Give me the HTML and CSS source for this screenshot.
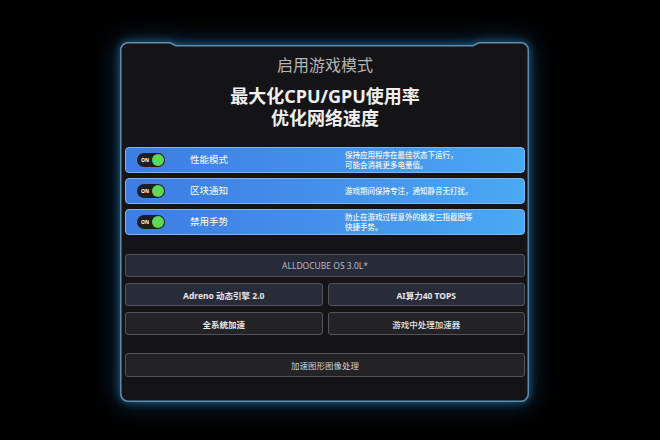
FILE: index.html
```html
<!DOCTYPE html>
<html lang="zh-CN">
<head>
<meta charset="utf-8">
<title>启用游戏模式</title>
<link rel="stylesheet" href="styles.css">
</head>
<body>
<div class="stage">
  <div class="panel">
    <svg class="frame" width="409" height="360" viewBox="0 0 409 360" aria-hidden="true">
      <path d="M0.75 8 A7.25 7.25 0 0 1 8 0.75 L50 0.75 L56 3.75 L353 3.75 L359 0.75 L401 0.75 A7.25 7.25 0 0 1 408.25 8 L408.25 352 A7.25 7.25 0 0 1 401 359.25 L8 359.25 A7.25 7.25 0 0 1 0.75 352 Z"/>
    </svg>
    <div class="content">
      <div class="title">启用游戏模式</div>
      <div class="headline">最大化CPU/GPU使用率<br>优化网络速度</div>

      <div class="rows">
        <div class="row">
          <div class="toggle"><span class="on">ON</span><span class="knob"></span></div>
          <div class="label">性能模式</div>
          <div class="desc">保持应用程序在最佳状态下运行，<br>可能会消耗更多电量值。</div>
        </div>
        <div class="row">
          <div class="toggle"><span class="on">ON</span><span class="knob"></span></div>
          <div class="label">区块通知</div>
          <div class="desc">游戏期间保持专注，通知静音无打扰。</div>
        </div>
        <div class="row">
          <div class="toggle"><span class="on">ON</span><span class="knob"></span></div>
          <div class="label">禁用手势</div>
          <div class="desc">防止在游戏过程意外的触发三指截图等<br>快捷手势。</div>
        </div>
      </div>

      <div class="btn wide os">ALLDOCUBE OS 3.0L*</div>
      <div class="grid">
        <div class="btn blue bold">Adreno 动态引擎 2.0</div>
        <div class="btn blue bold">AI算力40 TOPS</div>
        <div class="btn gray bold">全系统加速</div>
        <div class="btn gray semi">游戏中处理加速器</div>
      </div>
      <div class="btn wide gray last">加速图形图像处理</div>
    </div>
  </div>
</div>
</body>
</html>
```

FILE: styles.css
```css
html, body {
  margin: 0;
  padding: 0;
  background: #000;
}
body {
  width: 660px;
  height: 440px;
  overflow: hidden;
  font-family: "Noto Sans", "Noto Sans CJK SC", sans-serif;
}
.stage {
  padding: 42px 0 0 120px;
}
.panel {
  position: relative;
  width: 409px;
  height: 360px;
}
.frame {
  position: absolute;
  left: 0;
  top: 0;
  filter: drop-shadow(0 0 4px rgba(45, 125, 185, 0.7)) drop-shadow(0 0 12px rgba(30, 95, 150, 0.55));
}
.frame path {
  fill: #141416;
  stroke: #5f8cab;
  stroke-width: 1.5;
}
.content {
  position: relative;
  display: flex;
  flex-direction: column;
  padding: 12px 4px 0 5px;
}
.title {
  text-align: center;
  font-size: 16px;
  line-height: 22px;
  color: #b4b4b6;
}
.headline {
  margin-top: 9px;
  text-align: center;
  font-size: 18px;
  line-height: 22px;
  font-weight: 700;
  color: #f0f0f0;
}
.rows {
  margin-top: 18px;
  display: flex;
  flex-direction: column;
  gap: 5px;
}
.row {
  box-sizing: border-box;
  height: 26px;
  border: 1px solid #7bb6f2;
  border-radius: 4px;
  background: linear-gradient(90deg, #3e7de4 0%, #4592ec 55%, #4aa9f4 100%);
  display: grid;
  grid-template-columns: 53px 155px 1fr;
  align-items: center;
  padding-left: 11px;
}
.toggle {
  position: relative;
  width: 28px;
  height: 14px;
  border-radius: 7px;
  background: #1d1e22;
  display: flex;
  align-items: center;
  justify-content: space-between;
  padding: 0 1px 0 4px;
  box-sizing: border-box;
}
.on {
  font-size: 5px;
  font-weight: 700;
  color: #fff;
  line-height: 1;
}
.knob {
  width: 12px;
  height: 12px;
  border-radius: 50%;
  background: #5ed85a;
}
.label {
  font-size: 9.5px;
  color: #fff;
  line-height: 12px;
}
.desc {
  font-size: 7.5px;
  line-height: 10px;
  font-weight: 500;
  color: #f2f6ff;
}
.btn {
  box-sizing: border-box;
  height: 23px;
  border: 1px solid #51545d;
  border-radius: 3px;
  display: flex;
  align-items: center;
  justify-content: center;
  font-size: 8.5px;
  color: #e6e6e8;
}
.os {
  margin-top: 19px;
  background: #272a37;
  color: #b9bbc2;
}
.grid {
  margin-top: 6px;
  display: grid;
  grid-template-columns: 1fr 1fr;
  gap: 6px 5px;
}
.blue {
  background: #282b38;
}
.gray {
  background: #232326;
}
.bold {
  font-weight: 700;
}
.semi {
  font-weight: 500;
}
.last {
  margin-top: 18px;
  height: 24px;
  color: #cfcfd2;
}
```
